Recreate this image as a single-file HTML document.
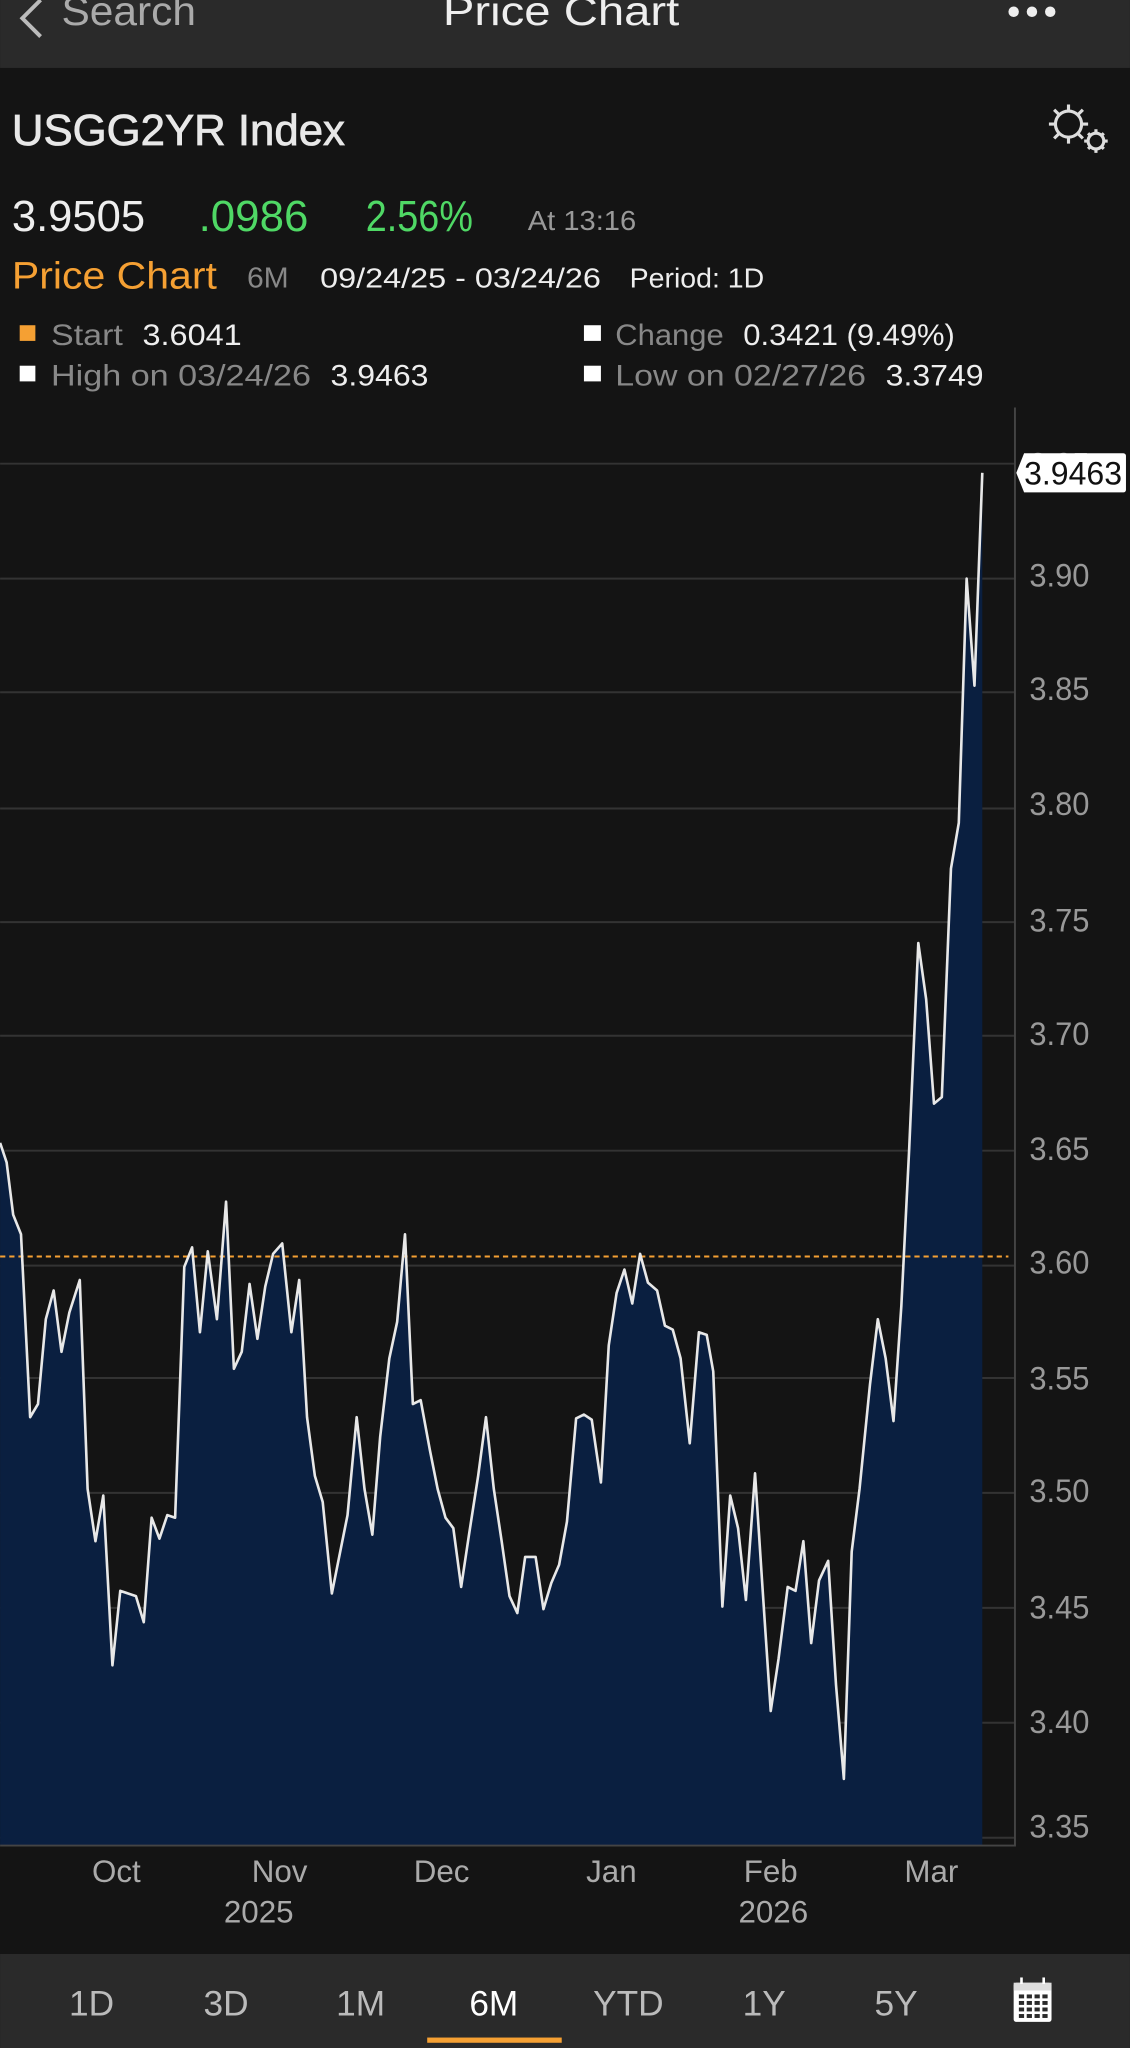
<!DOCTYPE html>
<html><head><meta charset="utf-8"><style>
html,body{margin:0;padding:0;background:#141414;width:1130px;height:2048px;overflow:hidden}
svg{display:block}
text{font-family:"Liberation Sans Narrow","Liberation Sans",sans-serif}
</style></head><body>
<svg width="1130" height="2048" viewBox="0 0 865 1568" xmlns="http://www.w3.org/2000/svg">
<rect width="865" height="1568" fill="#141414"/>
<rect width="865" height="52" fill="#2a2a2a"/>
<path d="M31 0 L17 14 L31 28" stroke="#bbb" stroke-width="3" fill="none"/>
<text x="47" y="19" font-size="31" fill="#aaa" textLength="103" lengthAdjust="spacingAndGlyphs">Search</text>
<text x="339" y="19" font-size="31" fill="#eee" textLength="181" lengthAdjust="spacingAndGlyphs">Price Chart</text>
<circle cx="776" cy="9" r="4" fill="#eee"/><circle cx="790" cy="9" r="4" fill="#eee"/><circle cx="804" cy="9" r="4" fill="#eee"/>
<text x="9" y="111" font-size="33" fill="#e8e8e8" stroke="#e8e8e8" stroke-width="0.6" textLength="255" lengthAdjust="spacingAndGlyphs">USGG2YR  Index</text>
<g fill="none" stroke="#ddd" stroke-width="2.4">
<circle cx="818" cy="95" r="10"/>
<path d="M818 80v5M818 105v5M803 95h5M828 95h5M807 84l4 4M825 102l4 4M829 84l-4 4M811 102l-4 4"/>
<circle cx="839" cy="108" r="6"/>
<path d="M839 99v3M839 114v3M830 108h3M845 108h3M833 102l2 2M843 112l2 2M845 102l-2 2M835 112l-2 2"/>
</g>
<text x="9" y="177" font-size="33" fill="#eee" textLength="102" lengthAdjust="spacingAndGlyphs">3.9505</text>
<text x="152" y="177" font-size="33" fill="#4fd865" textLength="84" lengthAdjust="spacingAndGlyphs">.0986</text>
<text x="280" y="177" font-size="33" fill="#4fd865" textLength="82" lengthAdjust="spacingAndGlyphs">2.56%</text>
<text x="404" y="176" font-size="21" fill="#999" textLength="83" lengthAdjust="spacingAndGlyphs">At 13:16</text>
<text x="9" y="221" font-size="29" fill="#f5a033" textLength="157" lengthAdjust="spacingAndGlyphs">Price Chart</text>
<text x="189" y="220" font-size="22" fill="#888" textLength="32" lengthAdjust="spacingAndGlyphs">6M</text>
<text x="245" y="220" font-size="21" fill="#eee" textLength="215" lengthAdjust="spacingAndGlyphs">09/24/25 - 03/24/26</text>
<text x="482" y="220" font-size="21" fill="#eee" textLength="103" lengthAdjust="spacingAndGlyphs">Period: 1D</text>
<rect x="15" y="249" width="12" height="12" fill="#f5a033"/>
<text x="39" y="264" font-size="23" fill="#888" textLength="55" lengthAdjust="spacingAndGlyphs">Start</text>
<text x="109" y="264" font-size="23" fill="#eee" textLength="76" lengthAdjust="spacingAndGlyphs">3.6041</text>
<rect x="15" y="280" width="12" height="12" fill="#fff"/>
<text x="39" y="295" font-size="23" fill="#888" textLength="199" lengthAdjust="spacingAndGlyphs">High on 03/24/26</text>
<text x="253" y="295" font-size="23" fill="#eee" textLength="75" lengthAdjust="spacingAndGlyphs">3.9463</text>
<rect x="447" y="249" width="13" height="12" fill="#fff"/>
<text x="471" y="264" font-size="23" fill="#888" textLength="83" lengthAdjust="spacingAndGlyphs">Change</text>
<text x="569" y="264" font-size="23" fill="#eee" textLength="162" lengthAdjust="spacingAndGlyphs">0.3421 (9.49%)</text>
<rect x="447" y="280" width="13" height="12" fill="#fff"/>
<text x="471" y="295" font-size="23" fill="#888" textLength="192" lengthAdjust="spacingAndGlyphs">Low on 02/27/26</text>
<text x="678" y="295" font-size="23" fill="#eee" textLength="75" lengthAdjust="spacingAndGlyphs">3.3749</text>
<g stroke="#333" stroke-width="1.5">
<path d="M0 355H777M0 443H777M0 530H777M0 619H777M0 706H777M0 793H777M0 881H777M0 969H777M0 1055H777M0 1143H777M0 1231H777M0 1319H777M0 1407H777"/>
</g>
<g font-size="25" fill="#999">
<text x="788" y="364" textLength="46" lengthAdjust="spacingAndGlyphs">3.95</text>
<text x="788" y="449" textLength="46" lengthAdjust="spacingAndGlyphs">3.90</text><text x="788" y="536" textLength="46" lengthAdjust="spacingAndGlyphs">3.85</text><text x="788" y="624" textLength="46" lengthAdjust="spacingAndGlyphs">3.80</text>
<text x="788" y="713" textLength="46" lengthAdjust="spacingAndGlyphs">3.75</text><text x="788" y="800" textLength="46" lengthAdjust="spacingAndGlyphs">3.70</text><text x="788" y="888" textLength="46" lengthAdjust="spacingAndGlyphs">3.65</text>
<text x="788" y="975" textLength="46" lengthAdjust="spacingAndGlyphs">3.60</text><text x="788" y="1064" textLength="46" lengthAdjust="spacingAndGlyphs">3.55</text><text x="788" y="1150" textLength="46" lengthAdjust="spacingAndGlyphs">3.50</text>
<text x="788" y="1239" textLength="46" lengthAdjust="spacingAndGlyphs">3.45</text><text x="788" y="1327" textLength="46" lengthAdjust="spacingAndGlyphs">3.40</text><text x="788" y="1407" textLength="46" lengthAdjust="spacingAndGlyphs">3.35</text>
</g>
<polygon fill="#0a1f40" points="0,875 5,890 10,930 16,945 23,1085 29,1075 35,1010 41,988 47,1035 53,1005 61,980 67,1140 73,1180 79,1145 86,1275 92,1218 98,1220 104,1222 110,1242 116,1162 122,1178 128,1160 134,1162 141,970 147,955 153,1020 159,958 166,1010 173,920 179,1048 185,1035 191,983 197,1025 203,985 209,960 216,952 223,1020 229,980 235,1085 241,1130 247,1150 254,1220 260,1190 266,1160 273,1085 279,1140 285,1175 291,1100 298,1040 304,1012 310,945 316,1075 322,1072 329,1110 335,1140 341,1162 347,1170 353,1215 359,1175 366,1130 372,1085 378,1140 384,1180 390,1222 396,1235 402,1192 410,1192 416,1232 422,1212 428,1198 434,1165 441,1086 447,1083 453,1087 460,1135 466,1030 472,990 478,972 484,998 490,960 496,982 503,988 509,1015 515,1018 521,1040 528,1105 535,1020 541,1022 546,1050 553,1230 559,1145 565,1170 571,1225 578,1128 584,1220 590,1310 596,1270 603,1215 609,1218 615,1180 621,1258 627,1210 634,1195 640,1290 646,1362 652,1188 658,1140 666,1060 672,1010 678,1040 684,1088 690,1000 696,880 703,722 709,765 715,845 721,840 728,665 734,630 740,443 746,525 752,362 752,1413 0,1413"/>
<line x1="0" y1="962" x2="772" y2="962" stroke="#f5a033" stroke-width="1.5" stroke-dasharray="4,3"/>
<polyline fill="none" stroke="#e8e8e8" stroke-width="2" stroke-linejoin="round" points="0,875 5,890 10,930 16,945 23,1085 29,1075 35,1010 41,988 47,1035 53,1005 61,980 67,1140 73,1180 79,1145 86,1275 92,1218 98,1220 104,1222 110,1242 116,1162 122,1178 128,1160 134,1162 141,970 147,955 153,1020 159,958 166,1010 173,920 179,1048 185,1035 191,983 197,1025 203,985 209,960 216,952 223,1020 229,980 235,1085 241,1130 247,1150 254,1220 260,1190 266,1160 273,1085 279,1140 285,1175 291,1100 298,1040 304,1012 310,945 316,1075 322,1072 329,1110 335,1140 341,1162 347,1170 353,1215 359,1175 366,1130 372,1085 378,1140 384,1180 390,1222 396,1235 402,1192 410,1192 416,1232 422,1212 428,1198 434,1165 441,1086 447,1083 453,1087 460,1135 466,1030 472,990 478,972 484,998 490,960 496,982 503,988 509,1015 515,1018 521,1040 528,1105 535,1020 541,1022 546,1050 553,1230 559,1145 565,1170 571,1225 578,1128 584,1220 590,1310 596,1270 603,1215 609,1218 615,1180 621,1258 627,1210 634,1195 640,1290 646,1362 652,1188 658,1140 666,1060 672,1010 678,1040 684,1088 690,1000 696,880 703,722 709,765 715,845 721,840 728,665 734,630 740,443 746,525 752,362"/>
<path d="M777 312V1413H0" stroke="#444" stroke-width="1.5" fill="none"/>
<path d="M784 347H860a2 2 0 0 1 2 2V375a2 2 0 0 1-2 2H784L778 362Z" fill="#fff"/>
<text x="784" y="371" font-size="25" fill="#111" textLength="75" lengthAdjust="spacingAndGlyphs">3.9463</text>
<g font-size="24" fill="#aaa" text-anchor="middle">
<text x="89" y="1441">Oct</text><text x="214" y="1441">Nov</text><text x="338" y="1441">Dec</text>
<text x="468" y="1441">Jan</text><text x="590" y="1441">Feb</text><text x="713" y="1441">Mar</text>
<text x="198" y="1472">2025</text><text x="592" y="1472">2026</text>
</g>
<rect y="1496" width="865" height="72" fill="#2a2a2a"/>
<g font-size="27" fill="#bbb" text-anchor="middle">
<text x="70" y="1543">1D</text><text x="173" y="1543">3D</text><text x="276" y="1543">1M</text>
<text x="378" y="1543" fill="#fff">6M</text><text x="481" y="1543">YTD</text><text x="585" y="1543">1Y</text><text x="686" y="1543">5Y</text>
</g>
<rect x="327" y="1560" width="103" height="4" fill="#f5a033"/>
<rect x="776" y="1518" width="29" height="30" rx="2" fill="#fff"/>
<rect x="776" y="1518" width="29" height="6" fill="#ddd"/>
<g fill="#2a2a2a">
<rect x="780" y="1527" width="4" height="3"/><rect x="786" y="1527" width="4" height="3"/><rect x="792" y="1527" width="4" height="3"/><rect x="798" y="1527" width="4" height="3"/>
<rect x="780" y="1532" width="4" height="3"/><rect x="786" y="1532" width="4" height="3"/><rect x="792" y="1532" width="4" height="3"/><rect x="798" y="1532" width="4" height="3"/>
<rect x="780" y="1537" width="4" height="3"/><rect x="786" y="1537" width="4" height="3"/><rect x="792" y="1537" width="4" height="3"/><rect x="798" y="1537" width="4" height="3"/>
<rect x="780" y="1542" width="4" height="3"/><rect x="786" y="1542" width="4" height="3"/><rect x="792" y="1542" width="4" height="3"/><rect x="798" y="1542" width="4" height="3"/>
</g>
<rect x="781" y="1514" width="2" height="5" fill="#fff"/><rect x="798" y="1514" width="2" height="5" fill="#fff"/>
</svg>
</body></html>
